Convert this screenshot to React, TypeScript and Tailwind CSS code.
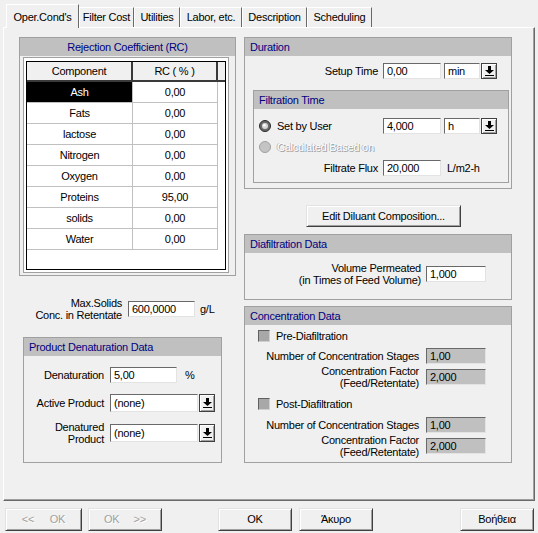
import React from "react";

// classic 3D edges
const raised =
  "border border-t-[#e3e3e3] border-l-[#e3e3e3] border-r-[#404040] border-b-[#404040] bg-[#f0f0f0] shadow-[inset_1px_1px_0_#fff,inset_-1px_-1px_0_#a0a0a0]";
const sunken =
  "border border-t-[#696969] border-l-[#696969] border-r-[#e3e3e3] border-b-[#e3e3e3]";

const rcRows = [
  ["Ash", "0,00"],
  ["Fats", "0,00"],
  ["lactose", "0,00"],
  ["Nitrogen", "0,00"],
  ["Oxygen", "0,00"],
  ["Proteins", "95,00"],
  ["solids", "0,00"],
  ["Water", "0,00"],
];

function TextBox({
  value,
  className = "",
  disabled = false,
}: {
  value: string;
  className?: string;
  disabled?: boolean;
}) {
  return (
    <div
      className={`flex items-center pl-[3px] text-black ${sunken} ${
        disabled ? "bg-[#c0c0c0]" : "bg-white"
      } ${className}`}
    >
      {value}
    </div>
  );
}

function DropArrow({ className = "h-[16px]" }: { className?: string }) {
  return (
    <div
      className={`flex w-[16px] items-center justify-center border border-[#404040] bg-[#f0f0f0] shadow-[inset_1px_1px_0_#fff,inset_-1px_-1px_0_#a0a0a0] ${className}`}
    >
      <svg width="9" height="10" viewBox="0 0 9 10">
        <path d="M3 0h3v4h3L4.5 8 0 4h3z" fill="#000" />
        <rect x="0" y="9" width="9" height="1" fill="#000" />
      </svg>
    </div>
  );
}

function Group({
  title,
  className = "",
  center = false,
  children,
}: {
  title: string;
  className?: string;
  center?: boolean;
  children?: React.ReactNode;
}) {
  return (
    <div className={`flex flex-col border border-[#a0a0a0] ${className}`}>
      <div
        className={`flex h-[18px] shrink-0 items-center bg-[#c0c0c0] px-[5px] text-[#000080] ${
          center ? "justify-center" : ""
        }`}
      >
        {title}
      </div>
      {children}
    </div>
  );
}

function Radio({ checked }: { checked: boolean }) {
  return checked ? (
    <svg width="12" height="12" viewBox="0 0 12 12">
      <circle cx="6" cy="6" r="5.5" fill="#6a6a6a" stroke="#2a2a2a" />
      <circle cx="6" cy="6" r="3" fill="#d8d8d8" />
      <circle cx="5.3" cy="5.3" r="1.3" fill="#ffffff" />
    </svg>
  ) : (
    <svg width="12" height="12" viewBox="0 0 12 12">
      <circle cx="6" cy="6" r="5.5" fill="#c4c4c4" stroke="#a0a0a0" />
    </svg>
  );
}

function CheckBox() {
  return (
    <div className="h-[12px] w-[12px] border border-t-[#606060] border-l-[#606060] border-r-[#d0d0d0] border-b-[#d0d0d0] bg-[#a8a8a8]" />
  );
}

function Tab({ label, className }: { label: string; className: string }) {
  return (
    <div
      className={`flex h-[20px] items-center justify-center border-l border-t border-r border-l-white border-t-white border-r-[#696969] ${className}`}
    >
      {label}
    </div>
  );
}

function DialogButton({
  label,
  className = "",
  disabled = false,
}: {
  label: React.ReactNode;
  className?: string;
  disabled?: boolean;
}) {
  return (
    <div
      className={`flex h-[23px] w-[73px] items-center justify-center ${raised} ${
        disabled ? "text-[#a0a0a0] [text-shadow:1px_1px_0_#fff]" : "text-black"
      } ${className}`}
    >
      {label}
    </div>
  );
}

export default function App() {
  return (
    <div className="flex h-[533px] w-[538px] flex-col overflow-hidden bg-[#f0f0f0] font-['Liberation_Sans',Arial,sans-serif] text-[11px] tracking-[-0.25px] leading-[13px] text-black">
      {/* tab strip */}
      <div className="flex h-[27px] items-end pl-[6px]">
        <div className="relative z-10 -mb-px flex h-[24px] w-[73px] items-start justify-center border-l border-t border-r border-l-white border-t-white border-r-[#696969] bg-[#f0f0f0] pt-[6px]">
          Oper.Cond's
        </div>
        <Tab label="Filter Cost" className="w-[55px]" />
        <Tab label="Utilities" className="w-[46px]" />
        <Tab label="Labor, etc." className="w-[62px]" />
        <Tab label="Description" className="w-[65px]" />
        <Tab label="Scheduling" className="w-[65px]" />
      </div>

      {/* tab panel */}
      <div className="ml-[3px] flex h-[474px] w-[532px] border border-t-white border-l-white border-r-[#696969] border-b-[#696969] pl-[15px] pt-[9px] shadow-[inset_-1px_-1px_0_#a0a0a0]">
        {/* left column */}
        <div className="flex w-[217px] flex-col">
          <Group title="Rejection Coefficient (RC)" center className="h-[239px]">
            <div className="ml-[3px] mt-[1px] h-[216px] w-[206px] border border-[#a0a0a0] bg-white p-[2px] pt-[3px]">
              <div className="flex h-full flex-col border border-black bg-white">
                <div className="flex h-[20px]">
                  <div className="flex w-[106px] items-center justify-center border-b-2 border-r-2 border-[#3a3a3a] bg-[#f0f0f0]">
                    Component
                  </div>
                  <div className="flex w-[85px] items-center justify-center border-b-2 border-r-2 border-[#3a3a3a] bg-[#f0f0f0]">
                    RC ( % )
                  </div>
                  <div className="flex-1 border-b-2 border-[#3a3a3a] bg-[#f0f0f0]" />
                </div>
                {rcRows.map(([name, rc], i) => (
                  <div key={name} className="flex h-[21px]">
                    <div
                      className={`flex w-[106px] items-center justify-center border-b border-r border-[#c0c0c0] ${
                        i === 0 ? "bg-black text-white" : ""
                      }`}
                    >
                      {name}
                    </div>
                    <div className="flex w-[85px] items-center justify-center border-b border-r border-[#c0c0c0]">
                      {rc}
                    </div>
                  </div>
                ))}
              </div>
            </div>
          </Group>

          <div className="mt-[20px] flex h-[26px] items-center">
            <div className="w-[103px] text-right leading-[12px]">
              Max.Solids
              <br />
              Conc. in Retentate
            </div>
            <TextBox value="600,0000" className="ml-[6px] h-[16px] w-[67px]" />
            <span className="ml-[5px]">g/L</span>
          </div>

          <Group title="Product Denaturation Data" className="ml-[4px] mt-[15px] h-[126px] w-[199px]">
            <div className="mt-[11px] flex h-[16px] items-center">
              <div className="w-[80px] text-right">Denaturation</div>
              <TextBox value="5,00" className="ml-[6px] h-[16px] w-[67px]" />
              <span className="ml-[8px]">%</span>
            </div>
            <div className="mt-[11px] flex h-[18px] items-center">
              <div className="w-[80px] text-right">Active Product</div>
              <TextBox value="(none)" className="ml-[6px] h-[18px] w-[88px]" />
              <DropArrow className="ml-[1px] h-[18px]" />
            </div>
            <div className="mt-[8px] flex h-[26px] items-center">
              <div className="w-[80px] text-right leading-[12px]">
                Denatured
                <br />
                Product
              </div>
              <TextBox value="(none)" className="ml-[6px] h-[18px] w-[88px]" />
              <DropArrow className="ml-[1px] h-[18px]" />
            </div>
          </Group>
        </div>

        {/* right column */}
        <div className="ml-[8px] flex w-[268px] flex-col">
          <Group title="Duration" className="h-[152px]">
            <div className="mt-[7px] flex h-[16px] items-center">
              <div className="w-[133px] text-right">Setup Time</div>
              <TextBox value="0,00" className="ml-[5px] h-[16px] w-[58px]" />
              <TextBox value="min" className="ml-[3px] h-[16px] w-[36px]" />
              <DropArrow className="ml-[1px] h-[16px]" />
            </div>
            <Group title="Filtration Time" className="ml-[8px] mt-[11px] h-[93px] w-[256px]">
              <div className="mt-[9px] flex h-[16px] items-center">
                <div className="flex w-[124px] items-center pl-[5px]">
                  <Radio checked />
                  <span className="ml-[6px]">Set by User</span>
                </div>
                <TextBox value="4,000" className="ml-[5px] h-[16px] w-[58px]" />
                <TextBox value="h" className="ml-[3px] h-[16px] w-[36px]" />
                <DropArrow className="ml-[1px] h-[16px]" />
              </div>
              <div className="mt-[7px] flex h-[12px] items-center pl-[5px]">
                <Radio checked={false} />
                <span className="ml-[6px] text-white [text-shadow:1px_1px_0_#a0a0a0,-1px_0_0_#b8b8b8]">
                  Calculated Based on
                </span>
              </div>
              <div className="mt-[7px] flex h-[16px] items-center">
                <div className="w-[124px] text-right">Filtrate Flux</div>
                <TextBox value="20,000" className="ml-[5px] h-[16px] w-[58px]" />
                <span className="ml-[6px]">L/m2-h</span>
              </div>
            </Group>
          </Group>

          <div className={`ml-[62px] mt-[16px] flex h-[22px] w-[155px] items-center justify-center ${raised}`}>
            Edit Diluant Composition...
          </div>

          <Group title="Diafiltration Data" className="mt-[7px] h-[66px]">
            <div className="mt-[8px] flex h-[26px] items-center">
              <div className="w-[176px] text-right leading-[12px]">
                Volume Permeated
                <br />
                (in Times of Feed Volume)
              </div>
              <TextBox value="1,000" className="ml-[5px] h-[16px] w-[60px]" />
            </div>
          </Group>

          <Group title="Concentration Data" className="mt-[6px] h-[157px]">
            <div className="mt-[5px] flex h-[12px] items-center pl-[13px]">
              <CheckBox />
              <span className="ml-[6px]">Pre-Diafiltration</span>
            </div>
            <div className="mt-[6px] flex h-[16px] items-center">
              <div className="w-[174px] text-right">Number of Concentration Stages</div>
              <TextBox value="1,00" disabled className="ml-[7px] h-[16px] w-[60px]" />
            </div>
            <div className="flex h-[26px] items-center">
              <div className="w-[174px] text-right leading-[12px]">
                Concentration Factor
                <br />
                (Feed/Retentate)
              </div>
              <TextBox value="2,000" disabled className="ml-[7px] h-[16px] w-[60px]" />
            </div>
            <div className="mt-[8px] flex h-[12px] items-center pl-[13px]">
              <CheckBox />
              <span className="ml-[6px]">Post-Diafiltration</span>
            </div>
            <div className="mt-[7px] flex h-[16px] items-center">
              <div className="w-[174px] text-right">Number of Concentration Stages</div>
              <TextBox value="1,00" disabled className="ml-[7px] h-[16px] w-[60px]" />
            </div>
            <div className="flex h-[26px] items-center">
              <div className="w-[174px] text-right leading-[12px]">
                Concentration Factor
                <br />
                (Feed/Retentate)
              </div>
              <TextBox value="2,000" disabled className="ml-[7px] h-[16px] w-[60px]" />
            </div>
          </Group>
        </div>
      </div>

      {/* dialog buttons */}
      <div className="mt-[7px] flex items-center pl-[5px]">
        <DialogButton
          disabled
          className="w-[77px]"
          label={
            <span className="flex w-full justify-around px-[8px]">
              <span>&lt;&lt;</span>
              <span>OK</span>
            </span>
          }
        />
        <DialogButton
          disabled
          className="ml-[6px] w-[74px]"
          label={
            <span className="flex w-full justify-around px-[8px]">
              <span>OK</span>
              <span>&gt;&gt;</span>
            </span>
          }
        />
        <DialogButton label="OK" className="ml-[56px] w-[74px] border-black shadow-[inset_1px_1px_0_#fff,inset_-1px_-1px_0_#696969]" />
        <DialogButton label="Άκυρο" className="ml-[7px] w-[74px]" />
        <DialogButton label="Βοήθεια" className="ml-auto mr-[4px] w-[74px]" />
      </div>
    </div>
  );
}
